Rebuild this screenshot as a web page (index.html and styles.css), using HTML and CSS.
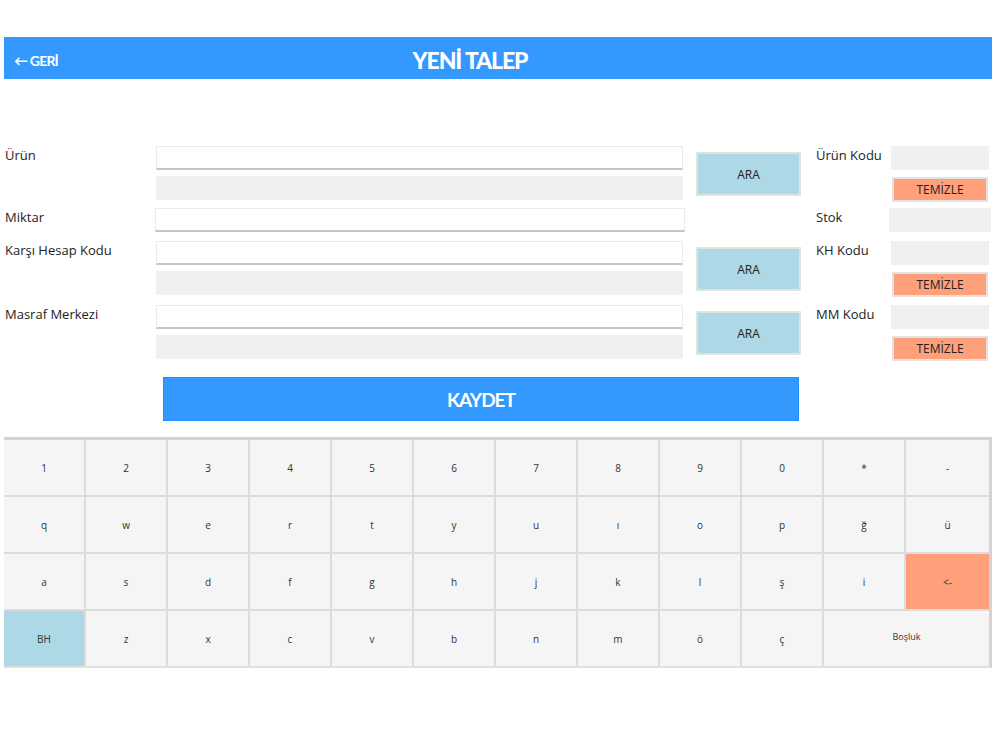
FILE: index.html
```html
<!DOCTYPE html>
<html>
<head>
    <title>Yeni Talep</title>
    <link rel="stylesheet" href="styles.css">
</head>
<body>
    <div class="page">
        <div class="topbar">
            <a class="back" href="#">&larr; GERİ</a>
            <h1 class="title">YENİ TALEP</h1>
        </div>

        <div class="form">
            <div class="field">
                <label class="lbl">Ürün</label>
                <div class="stack">
                    <input class="txt" type="text">
                    <div class="ro"></div>
                </div>
                <button class="ara">ARA</button>
                <label class="lbl-r">Ürün Kodu</label>
                <div class="stack-r">
                    <div class="ro"></div>
                    <button class="temizle">TEMİZLE</button>
                </div>
            </div>

            <div class="field single">
                <label class="lbl">Miktar</label>
                <div class="stack wide">
                    <input class="txt" type="text">
                </div>
                <div class="ara-space"></div>
                <label class="lbl-r">Stok</label>
                <div class="stack-r wide">
                    <div class="ro"></div>
                </div>
            </div>

            <div class="field">
                <label class="lbl">Karşı Hesap Kodu</label>
                <div class="stack">
                    <input class="txt" type="text">
                    <div class="ro"></div>
                </div>
                <button class="ara">ARA</button>
                <label class="lbl-r">KH Kodu</label>
                <div class="stack-r">
                    <div class="ro"></div>
                    <button class="temizle">TEMİZLE</button>
                </div>
            </div>

            <div class="field last">
                <label class="lbl">Masraf Merkezi</label>
                <div class="stack">
                    <input class="txt" type="text">
                    <div class="ro"></div>
                </div>
                <button class="ara">ARA</button>
                <label class="lbl-r">MM Kodu</label>
                <div class="stack-r">
                    <div class="ro"></div>
                    <button class="temizle">TEMİZLE</button>
                </div>
            </div>
        </div>

        <button class="save">KAYDET</button>

        <div class="keyboard">
            <button class="key">1</button>
            <button class="key">2</button>
            <button class="key">3</button>
            <button class="key">4</button>
            <button class="key">5</button>
            <button class="key">6</button>
            <button class="key">7</button>
            <button class="key">8</button>
            <button class="key">9</button>
            <button class="key">0</button>
            <button class="key">*</button>
            <button class="key">-</button>

            <button class="key">q</button>
            <button class="key">w</button>
            <button class="key">e</button>
            <button class="key">r</button>
            <button class="key">t</button>
            <button class="key">y</button>
            <button class="key">u</button>
            <button class="key">ı</button>
            <button class="key">o</button>
            <button class="key">p</button>
            <button class="key">ğ</button>
            <button class="key">ü</button>

            <button class="key">a</button>
            <button class="key">s</button>
            <button class="key">d</button>
            <button class="key">f</button>
            <button class="key">g</button>
            <button class="key">h</button>
            <button class="key">j</button>
            <button class="key">k</button>
            <button class="key">l</button>
            <button class="key">ş</button>
            <button class="key">i</button>
            <button class="key key-del">&lt;-</button>

            <button class="key key-caps">BH</button>
            <button class="key">z</button>
            <button class="key">x</button>
            <button class="key">c</button>
            <button class="key">v</button>
            <button class="key">b</button>
            <button class="key">n</button>
            <button class="key">m</button>
            <button class="key">ö</button>
            <button class="key">ç</button>
            <button class="key key-space">Boşluk</button>
        </div>
    </div>
</body>
</html>
```

FILE: styles.css
```css
body {
    margin: 0;
    font-family: 'Open Sans', 'Noto Sans', sans-serif;
    background-color: #fff;
    color: #222;
}
button {
    font-family: inherit;
    cursor: pointer;
}
.page {
    width: 988px;
    padding: 37px 0 0 4px;
}
.topbar {
    display: flex;
    align-items: center;
    box-sizing: border-box;
    height: 42px;
    padding-top: 4px;
    background-color: #3399ff;
}
.back {
    width: 90px;
    padding-left: 10px;
    font-family: 'Lato', sans-serif;
    font-weight: bold;
    font-size: 14px;
    letter-spacing: -0.8px;
    color: #fff;
    text-decoration: none;
}
.title {
    flex: 1;
    margin: 0;
    padding-right: 156px;
    text-align: center;
    font-family: 'Lato', sans-serif;
    font-weight: 900;
    font-size: 23px;
    letter-spacing: -1.1px;
    color: #fff;
}
.form {
    display: flex;
    flex-direction: column;
    gap: 7px;
    margin-top: 67px;
}
.field {
    display: flex;
    align-items: flex-start;
}
.field.single {
    margin: -1px 0 2px;
}
.field.last {
    margin-top: 1px;
}
.lbl {
    width: 151px;
    padding-left: 1px;
    font-size: 13px;
    line-height: 18px;
}
.stack {
    display: flex;
    flex-direction: column;
    gap: 6px;
    width: 527px;
}
.stack.wide {
    width: 530px;
    margin: 0 -2px 0 -1px;
}
.txt {
    box-sizing: border-box;
    height: 24px;
    margin: 0;
    border: 1px solid #ebebeb;
    border-bottom: 2px solid #c6c6c6;
    background-color: #fff;
    outline: none;
}
.ro {
    box-sizing: border-box;
    height: 24px;
    background-color: #f0f0f0;
}
.ara {
    width: 105px;
    height: 44px;
    margin: 6px 0 0 13px;
    border: 2px solid #e2e2e2;
    background-color: #add8e6;
    font-size: 12px;
    color: #222;
}
.ara-space {
    width: 105px;
    margin-left: 13px;
}
.lbl-r {
    width: 75px;
    margin-left: 15px;
    font-size: 13px;
    line-height: 18px;
}
.stack-r {
    display: flex;
    flex-direction: column;
    gap: 7px;
    width: 98px;
}
.stack-r.wide {
    width: 102px;
    margin-left: -2px;
}
.temizle {
    width: 96px;
    height: 25px;
    margin-left: 1px;
    padding: 0;
    border: 2px solid #e2e2e2;
    background-color: #ffa07a;
    font-size: 12px;
    color: #222;
}
.save {
    display: block;
    width: 636px;
    height: 44px;
    margin: 16px 0 0 159px;
    padding-top: 2px;
    border: 1px solid #1e90ff;
    background-color: #3399ff;
    font-family: 'Lato', sans-serif;
    font-weight: bold;
    font-size: 19px;
    letter-spacing: -1px;
    color: #fff;
}
.keyboard {
    display: grid;
    grid-template-columns: repeat(11, 80px) 1fr;
    grid-auto-rows: 55px;
    gap: 2px;
    margin-top: 16px;
    border-top: 3px solid #d3d3d3;
    border-right: 3px solid #d3d3d3;
    border-bottom: 2px solid #e0e0e0;
    background-color: #dcdcdc;
}
.key {
    padding: 0;
    border: none;
    background-color: #f5f5f5;
    font-size: 10px;
    color: #333;
}
.key-del {
    background-color: #ffa07a;
}
.key-caps {
    background-color: #add8e6;
}
.key-space {
    grid-column: span 2;
    padding-bottom: 4px;
    font-size: 9px;
}
```
